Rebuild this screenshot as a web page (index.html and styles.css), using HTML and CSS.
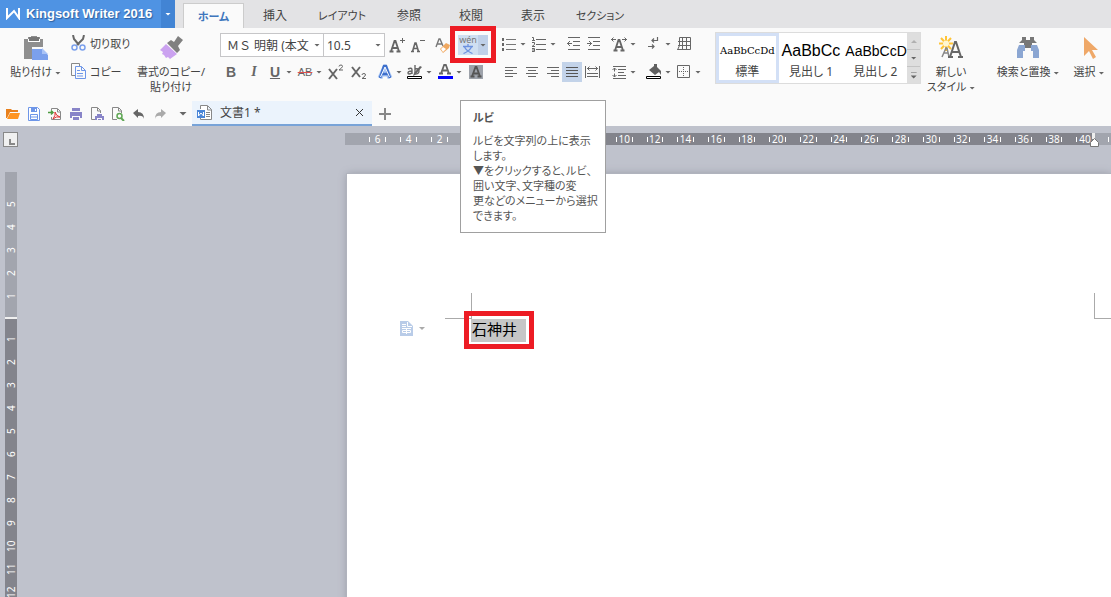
FILE: index.html
```html
<!DOCTYPE html>
<html lang="ja">
<head>
<meta charset="utf-8">
<title>Kingsoft Writer 2016</title>
<link rel="stylesheet" href="styles.css">
</head>
<body>
<header class="titlebar">
  <button class="brand"><svg class="logo" width="15" height="12" viewBox="0 0 15 12"><path d="M1 0v10l7-7 5 7V0" fill="none" stroke="#fff" stroke-width="2"/></svg><span>Kingsoft Writer 2016</span></button>
  <button class="brand-more" aria-label="メニュー"><i class="caret light"></i></button>
  <nav class="tabs">
    <button class="tab active">ホーム</button>
    <button class="tab">挿入</button>
    <button class="tab wide">レイアウト</button>
    <button class="tab">参照</button>
    <button class="tab">校閲</button>
    <button class="tab">表示</button>
    <button class="tab wide">セクション</button>
  </nav>
</header>

<section class="ribbon">
  <button class="big paste">
    <svg width="26" height="26" viewBox="0 0 26 26"><path d="M1 3h4V1h3V0h6v1h3v2h3v8H9v12H1z" fill="#8f8f8f"/><path d="M5 3h12v3H5z" fill="#fff"/><path d="M6 1h10v4H6z" fill="#777"/><path d="M9 13h10l6 6v5H9z" fill="#7ba0ec"/><path d="M19 12v6h6z" fill="#a9c3f6"/></svg>
    <span>貼り付け <i class="caret"></i></span>
  </button>
  <div class="clip">
    <button class="small"><svg width="15" height="16" viewBox="0 0 15 16"><path d="M2 0l1 4 5 6M13 0l-1 4-6 6" fill="none" stroke="#666" stroke-width="2"/><circle cx="3.500" cy="12.500" r="2.500" fill="none" stroke="#7ba0ec" stroke-width="1.500"/><circle cx="11.500" cy="12.500" r="2.500" fill="none" stroke="#7ba0ec" stroke-width="1.500"/></svg>切り取り</button>
    <button class="small"><svg width="15" height="16" viewBox="0 0 15 16"><path d="M4 12.500H.5V.5h8V3" fill="none" stroke="#888"/><path d="M4.500 3.500h6l4 4v8h-10zM10.500 3.500v4h4M6 7.500h3M6 10.500h6M6 13h6" fill="none" stroke="#6e96e8"/></svg>コピー</button>
  </div>
  <button class="big painter">
    <svg width="26" height="26" viewBox="0 0 26 26"><path d="M20 0l5 4-5 6 2 4-3 3L9 7l4-3 3 2z" fill="#808080"/><path d="M8 8l11 10-7 5-2-2-2 1-2-3-2-1 1-2-3-2z" fill="#cba2f0"/></svg>
    <span>書式のコピー/<br>貼り付け</span>
  </button>

  <div class="group font-group">
    <div class="row font-row-1">
      <button class="combo family"><span>ＭＳ 明朝 (本文</span><i class="caret"></i></button>
      <button class="combo size"><span>10.5</span><i class="caret"></i></button>
      <button class="ic" aria-label="フォントの拡大"><svg width="16" height="18" viewBox="0 0 16 18"><path d="M.5 15.500h4M7.500 15.500h4M2 15.500L5.500 5h1L10 15.500M4 12h5" fill="none" stroke="#666" stroke-width="1.800"/><path d="M11 4.500h5M13.500 2v5" stroke="#666"/></svg></button>
      <button class="ic" aria-label="フォントの縮小"><svg width="16" height="18" viewBox="0 0 16 18"><path d="M1 15.500h3M7 15.500h3M2.500 15.500L5 7h1l2.500 8.500M4 12.500h4" fill="none" stroke="#666" stroke-width="1.600"/><path d="M10 4.500h5" stroke="#666"/></svg></button>
      <button class="ic" aria-label="書式のクリア"><svg width="18" height="18" viewBox="0 0 18 18"><path d="M2 11l3-8h1l3 7M3 8h5" fill="none" stroke="#777" stroke-width="1.400"/><path d="M6 13l6-6 4 2-1 3-6 5z" fill="#f0a860"/><path d="M7 13l2-2 3 2-3 3z" fill="#fff"/></svg></button>
      <button class="ruby" aria-label="ルビ"><span class="ruby-icon"><span class="wen">wén</span><svg width="12" height="10" viewBox="0 0 12 10"><path d="M6 0v2M1 2.500h10M2.500 3q2 4 8 6.500M9.500 3q-2 4-8 6.500" fill="none" stroke="#6c92df" stroke-width="1.300"/></svg></span><span class="ruby-more"><i class="caret"></i></span></button>
    </div>
    <div class="row font-row-2">
      <button class="ic letter"><b>B</b></button>
      <button class="ic letter italic"><i>I</i></button>
      <button class="split letter"><u>U</u><i class="caret"></i></button>
      <button class="split strike"><s>AB</s><i class="caret"></i></button>
      <button class="ic"><svg width="16" height="16" viewBox="0 0 16 16"><path d="M1 5l8 10M9 5L1 15" stroke="#666" stroke-width="2"/><path d="M11 2.500q0-1.500 2-1.500 1.500 0 1.500 1.500Q14 4 11 6h4" fill="none" stroke="#666"/></svg></button>
      <button class="ic"><svg width="16" height="16" viewBox="0 0 16 16"><path d="M1 3l8 10M9 3L1 13" stroke="#666" stroke-width="2"/><path d="M11 11q0-1.500 2-1.500 1.500 0 1.500 1.500-1 2-3.500 3.500h4" fill="none" stroke="#666"/></svg></button>
      <button class="split"><svg width="16" height="16" viewBox="0 0 16 16"><path d="M3 14L8 3l5 11M5 10h6" fill="none" stroke="#a9c6f6" stroke-width="5" stroke-linejoin="round"/><path d="M3 14L7 2h2l4 12M4.500 10h7" fill="none" stroke="#3e70cc" stroke-width="2.500"/><path d="M3.500 13L8 3l4.500 10" fill="none" stroke="#fff"/></svg><i class="caret"></i></button>
      <button class="split"><svg width="16" height="16" viewBox="0 0 16 16"><path d="M1 5q4-2 4 1v4M5 7Q1 7 1 9t4 0M8 1v9M8 5q4-1 4 2t-4 3" fill="none" stroke="#666" stroke-width="1.400"/><path d="M15 3L8 11l-2 1 1-3 6-7z" fill="#666"/><path d="M.5 12.500h14v2H.5z" fill="#fff" stroke="#000"/></svg><i class="caret"></i></button>
      <button class="split"><svg width="16" height="16" viewBox="0 0 16 16"><path d="M2 9.500h4M10 9.500h4M4 9.500L7.500 0h1L12 9.500M5 6.500h6" fill="none" stroke="#666" stroke-width="1.800"/><path d="M1 12h15v3H1z" fill="#00f"/></svg><i class="caret"></i></button>
      <button class="ic"><svg width="16" height="16" viewBox="0 0 16 16"><path d="M1 1h14v14H1z" fill="#9da2aa"/><path d="M2.500 12.500h4M9.500 12.500h4M4 12.500L7.500 3h1L12 12.500M5 9.500h6" fill="none" stroke="#555" stroke-width="1.800"/></svg></button>
    </div>
  </div>

  <div class="group para-group">
    <div class="row para-row-1">
      <button class="split"><svg width="16" height="16" viewBox="0 0 16 16"><path d="M5 3.500h10M5 8.500h10M5 13.500h10" stroke="#777"/><path d="M1 2h2v3H1zM1 7h2v3H1zM1 12h2v3H1z" fill="#666"/></svg><i class="caret"></i></button>
      <button class="split"><svg width="16" height="16" viewBox="0 0 16 16"><path d="M5 3.500h10M5 8.500h10M5 13.500h10M1 1.500h1.500v3M1 4.500h3M1 6.500h2.500v2L1 10.500h3M1 12.500h2.500v3H1M1 14h2" fill="none" stroke="#666"/></svg><i class="caret"></i></button>
      <button class="ic"><svg width="16" height="16" viewBox="0 0 16 16"><path d="M2 1.500h12M7 5.500h7M7 9.500h7M2 13.500h12M1 7.500h5M4 5L1.500 7.500 4 10" fill="none" stroke="#666"/></svg></button>
      <button class="ic"><svg width="16" height="16" viewBox="0 0 16 16"><path d="M2 1.500h12M7 5.500h7M7 9.500h7M2 13.500h12M1 7.500h5M3 5l2.500 2.500L3 10" fill="none" stroke="#666"/></svg></button>
      <button class="split"><svg width="16" height="16" viewBox="0 0 16 16"><path d="M2.500 14.500h4M9.500 14.500h4M4 14.500L7.500 4h1L12 14.500M5 11h6" fill="none" stroke="#666" stroke-width="1.800"/><path d="M0 3.500h5M11 3.500h5M2.500 1.500l-2 2 2 2M13.500 1.500l2 2-2 2" fill="none" stroke="#666"/></svg><i class="caret"></i></button>
      <button class="split"><svg width="16" height="16" viewBox="0 0 16 16"><path d="M11.500 1v3.500H6M8 2.500l-2 2 2 2M2 10.500h6M6 8.500l2 2-2 2" fill="none" stroke="#666" stroke-width="1.200"/></svg><i class="caret"></i></button>
      <button class="ic"><svg width="16" height="16" viewBox="0 0 16 16"><path d="M3.500 1.500h11v12H1.500M6.500 1v13M10.500 1v13M2 5.500h13M2 9.500h13M3.500 1.500v8L1.500 14" fill="none" stroke="#666"/></svg></button>
    </div>
    <div class="row para-row-2">
      <button class="ic"><svg width="16" height="16" viewBox="0 0 16 16"><path d="M2 3.500h12M2 6.500h8M2 9.500h12M2 12.500h8" stroke="#666"/></svg></button>
      <button class="ic"><svg width="16" height="16" viewBox="0 0 16 16"><path d="M2 3.500h12M4 6.500h8M2 9.500h12M4 12.500h8" stroke="#666"/></svg></button>
      <button class="ic"><svg width="16" height="16" viewBox="0 0 16 16"><path d="M2 3.500h12M6 6.500h8M2 9.500h12M6 12.500h8" stroke="#666"/></svg></button>
      <button class="ic pressed"><svg width="16" height="16" viewBox="0 0 16 16"><path d="M2 3.500h12M2 6.500h12M2 9.500h12M2 12.500h12" stroke="#555"/></svg></button>
      <button class="ic"><svg width="16" height="16" viewBox="0 0 16 16"><path d="M1.500 2v12M15.500 2v12M3 9.500h11M3 12.500h11M3 4.500h11M5.500 2.500l-2 2 2 2M11.500 2.500l2 2-2 2" fill="none" stroke="#666"/></svg></button>
      <button class="split"><svg width="16" height="16" viewBox="0 0 16 16"><path d="M2 2.500h13M7 5.500h8M7 8.500h6M7 11.500h8M2 14.500h13M3.500 4v3.500M3.500 9.500V13M1.500 6l2-2 2 2M1.500 11l2 2 2-2" fill="none" stroke="#666"/></svg><i class="caret"></i></button>
      <button class="split"><svg width="16" height="16" viewBox="0 0 16 16"><path d="M3 6l5-4V0h3v3l4 4v4l-2-3-4 3z" fill="#606060"/><path d="M.5 12.500h14v2H.5z" fill="#fff" stroke="#000"/></svg><i class="caret"></i></button>
      <button class="split"><svg width="16" height="16" viewBox="0 0 16 16"><path d="M1.500 1.500h12v12h-12z" fill="none" stroke="#666"/><path d="M7.500 3v9M3 7.500h9" stroke="#666" stroke-dasharray="1 1"/></svg><i class="caret"></i></button>
    </div>
  </div>

  <div class="gallery">
    <button class="style selected"><span class="sample serif">AaBbCcDd</span><span>標準</span></button>
    <button class="style"><span class="sample large">AaBbCc</span><span>見出し 1</span></button>
    <button class="style"><span class="sample">AaBbCcD</span><span>見出し 2</span></button>
    <div class="gallery-nav">
      <button aria-label="上へ"><i class="caret up"></i></button>
      <button aria-label="下へ"><i class="caret"></i></button>
      <button aria-label="すべて表示"><i class="caret lined"></i></button>
    </div>
  </div>

  <button class="big new-style">
    <svg width="26" height="26" viewBox="0 0 26 26"><path d="M8 0v15M1 7.500h14M3 2l10 11M13 2L3 13" stroke="#ffc436" stroke-width="2"/><circle cx="8" cy="7.500" r="3" fill="#fff6d0"/><path d="M4 21l4-9h1l2 9M6 17h4" fill="none" stroke="#888" stroke-width="1.500"/><path d="M12 21l5-15h1l5 15M14 16h7M10 21h5M20 21h5" fill="none" stroke="#666" stroke-width="2"/></svg>
    <span>新しい<br>スタイル <i class="caret"></i></span>
  </button>
  <button class="big find">
    <svg width="26" height="26" viewBox="0 0 26 26"><path d="M7 1h4v3h4V1h4v3l3 3H4l3-3zM9 7h8v5H9z" fill="#777"/><path d="M4 9h6v6H8v7H2v-8zM16 9h6l2 5v8h-6v-7h-2z" fill="#8ba6d2"/></svg>
    <span>検索と置換 <i class="caret"></i></span>
  </button>
  <button class="big select">
    <svg width="26" height="26" viewBox="0 0 26 26"><path d="M8 1v19l5-5 4 8 3-2-4-7h6z" fill="#efa868"/></svg>
    <span>選択 <i class="caret"></i></span>
  </button>
</section>

<section class="quickbar">
  <div class="quick">
    <button aria-label="開く"><svg width="14" height="14" viewBox="0 0 14 14"><path d="M0 2h5l1 1h6v2H4l-3 6H0z" fill="#e8801c"/><path d="M4 6h10l-2 6H1z" fill="#ff9420"/></svg></button>
    <button aria-label="保存"><svg width="14" height="14" viewBox="0 0 14 14"><path d="M1.500.5h9l2 2v11h-11z" fill="#fff" stroke="#6e96e8"/><path d="M4 1h6v4H4z" fill="#6e96e8"/><path d="M8 2h1v2H8z" fill="#fff"/><path d="M3.500 7.500h7v5h-7zM4 10h6" fill="none" stroke="#6e96e8"/></svg></button>
    <button aria-label="PDF出力"><svg width="14" height="14" viewBox="0 0 14 14"><path d="M3.500 3V1.500h6l3 3v8h-9V10M9.500 2v3h3" fill="none" stroke="#888"/><path d="M5 12q3-4 2-7 1 4 5 5-4-1-7 2" fill="none" stroke="#e03030"/><path d="M0 5.500h5M3 3.500l2 2-2 2" fill="none" stroke="#4d9a42" stroke-width="1.500"/></svg></button>
    <button aria-label="印刷"><svg width="14" height="14" viewBox="0 0 14 14"><path d="M3 1h8v3H3zM1 5h12v6h-2V9H3v2H1zM4 10h6v3H4z" fill="#8884c8"/></svg></button>
    <button aria-label="印刷設定"><svg width="14" height="14" viewBox="0 0 14 14"><path d="M5 12.500H1.500V.5h6l3 3V6M7.500 1v3h3" fill="none" stroke="#888"/><path d="M7 7h5v2h2v4h-2v-2H7v2H5V9h2zM8 12h3v1H8z" fill="#8884c8"/></svg></button>
    <button aria-label="印刷プレビュー"><svg width="14" height="14" viewBox="0 0 14 14"><path d="M6 12.500H1.500V.5h6l3 3V6M7.500 1v3h3" fill="none" stroke="#888"/><circle cx="8.500" cy="9" r="2.500" fill="none" stroke="#5fa654" stroke-width="1.500"/><path d="M10 11l3 3" stroke="#5fa654" stroke-width="2"/></svg></button>
    <button aria-label="元に戻す"><svg width="14" height="14" viewBox="0 0 14 14"><path d="M1 6l5-4v3q6 0 6 7-1-4-6-3v2z" fill="#666"/></svg></button>
    <button aria-label="やり直し"><svg width="14" height="14" viewBox="0 0 14 14"><path d="M13 6L8 2v3q-6 0-6 7 1-4 6-3v2z" fill="#aaa"/></svg></button>
    <button aria-label="その他"><i class="caret wide"></i></button>
  </div>
  <div class="doctab">
    <svg width="15" height="15" viewBox="0 0 15 15"><path d="M3.500 4V.5h7l4 4v10h-11V13M10.500 1v4h4M9 7.500h4M9 9.500h4M9 11.500h4" fill="#fff" stroke="#888"/><path d="M0 5h8v8H0z" fill="#4a86d8"/><path d="M1.500 7v4l2.500-3 2.500 3V7" fill="none" stroke="#fff"/></svg>
    <span>文書1 *</span>
    <button aria-label="閉じる"><svg width="9" height="9" viewBox="0 0 9 9"><path d="M1 1l7 7M8 1L1 8" stroke="#333"/></svg></button>
  </div>
  <button class="add" aria-label="新規"><svg width="12" height="12" viewBox="0 0 12 12"><path d="M0 6h12M6 0v12" stroke="#888" stroke-width="2"/></svg></button>
</section>

<main class="workspace">
  <aside class="left">
    <button class="tabstop" aria-label="タブ"><svg width="13" height="13" viewBox="0 0 13 13"><path d="M6 6v5h5" fill="none" stroke="#888" stroke-width="2"/></svg></button>
    <div class="vruler">
      <div class="vmargin"><span>5</span><span>4</span><span>3</span><span>2</span><span>1</span></div>
      <div class="vbody"><span>1</span><span>2</span><span>3</span><span>4</span><span>5</span><span>6</span><span>7</span><span>8</span><span>9</span><span>10</span><span>11</span><span>12</span></div>
    </div>
  </aside>
  <div class="canvas">
    <div class="hruler">
      <div class="hmargin"><span>6</span><span>4</span><span>2</span></div>
      <div class="hbody"><div class="marks"><span></span><span></span><span></span><span></span><span>10</span><span>12</span><span>14</span><span>16</span><span>18</span><span>20</span><span>22</span><span>24</span><span>26</span><span>28</span><span>30</span><span>32</span><span>34</span><span>36</span><span>38</span><span class="last">40</span></div></div>
      <div class="hend"><svg class="indent" width="9" height="14" viewBox="0 0 9 14"><path d="M2 0h3v6H2z" fill="#eee"/><path d="M.5 13.500v-4l4-4 4 4v4z" fill="#fff" stroke="#777"/></svg><i class="tick"></i></div>
    </div>
    <article class="page">
      <div class="corners"><i class="corner tl"></i><i class="corner tr"></i></div>
      <div class="line">
        <button class="para-menu" aria-label="段落"><svg width="13" height="15" viewBox="0 0 13 15"><path d="M0 0h8l5 5v10H0z" fill="#b9cce8"/><path d="M2 3.500h4M2 5.500h4M7.500 1v4.500H12M2 7.500h9M2.500 9.500h8v2h-8zM6.500 7v6" fill="none" stroke="#fff"/></svg><i class="caret pale"></i></button>
        <span class="selection">石神井</span>
      </div>
    </article>
  </div>
</main>

<div class="tooltip" role="tooltip">
  <h2>ルビ</h2>
  <p>ルビを文字列の上に表示<br>します。<br>▼をクリックすると、ルビ、<br>囲い文字、文字種の変<br>更などのメニューから選択<br>できます。</p>
</div>
<div class="mark mark-ruby"></div>
<div class="mark mark-text"></div>
</body>
</html>
```

FILE: styles.css
```css
* { box-sizing: border-box; }

body {
  margin: 0;
  min-height: 100vh;
  display: flex;
  flex-direction: column;
  position: relative;
  overflow: hidden;
  font: 12px/15px "Noto Sans", "Noto Sans CJK JP", sans-serif;
  font-feature-settings: "palt";
  color: #444;
  background: #bfc2cc;
}

button {
  margin: 0;
  padding: 0;
  border: 0;
  background: none;
  color: inherit;
  font: inherit;
  font-feature-settings: inherit;
  white-space: nowrap;
}

svg { display: block; flex: none; }

.caret {
  display: inline-block;
  flex: none;
  width: 6px;
  height: 3px;
  background: #666;
  clip-path: polygon(0 0, 100% 0, 50% 100%);
  vertical-align: middle;
}
.caret.light { background: #fff; }
.caret.pale { background: #aaa; }
.caret.wide { width: 8px; height: 4px; }
.caret.up { background: #b0b0b0; transform: rotate(180deg); }
.caret.lined { height: 7px; clip-path: polygon(0 0, 100% 0, 100% 1px, 0 1px, 0 4px, 100% 4px, 50% 100%, 0 4px); }

/* Title bar */
.titlebar { display: flex; height: 28px; background: #e3e3e5; }
.brand {
  display: flex;
  align-items: center;
  gap: 5px;
  width: 161px;
  padding-left: 6px;
  background: #4f93e3;
  color: #fff;
  font: bold 13px/28px "Liberation Sans", sans-serif;
  text-shadow: 1px 1px 1px #2c5f9f;
}
.brand-more { display: flex; align-items: center; justify-content: center; width: 14px; background: #4284d4; }
.tabs { display: flex; align-items: flex-end; padding-left: 8px; }
.tab { width: 62px; height: 25px; }
.tab.wide { width: 72px; font-size: 11px; }
.tab.active {
  width: 61px;
  background: #fafafa;
  border: 1px solid #ccc;
  border-bottom: 0;
  color: #3f76bd;
  font-size: 11px;
  font-weight: bold;
}

/* Ribbon */
.ribbon { display: flex; align-items: flex-start; height: 73px; padding-top: 4px; background: #fafafa; }
.big { display: flex; flex-direction: column; align-items: center; gap: 1px; padding-top: 4px; flex: none; font-size: 11px; }
.big > svg { margin-bottom: 1px; }
.paste { width: 71px; }
.clip { display: flex; flex-direction: column; gap: 12px; width: 66px; padding-top: 3px; flex: none; }
.small { display: flex; align-items: center; gap: 4px; font-size: 11px; }
.painter { width: 68px; }
.group { display: flex; flex-direction: column; gap: 7px; padding-top: 1px; flex: none; }
.font-group { width: 268px; margin-left: 15px; }
.para-group { width: 202px; margin-left: 13px; }
.row { display: grid; align-items: center; justify-items: start; height: 22px; }
.row + .row { height: 20px; }
.font-row-1 { grid-template-columns: 104px 65px 21px 24px 23px 31px; }
.font-row-2 { grid-template-columns: 23px 21px 30px 31px 23px 26px 30px 30px 31px 16px; padding-left: 3px; }
.para-row-1 { grid-template-columns: 30px 35px 20px 25px 35px 30px 16px; }
.para-row-2 { grid-template-columns: 21px 21px 17px 22px 27px 35px 30px 25px; padding-left: 2px; }
.combo {
  display: flex;
  align-items: center;
  justify-content: space-between;
  width: 104px;
  height: 24px;
  padding: 0 3px 0 6px;
  background: #fff;
  border: 1px solid #c6c6c8;
}
.combo.family { font-feature-settings: normal; }
.combo.size { width: 61px; padding-left: 3px; border-left: 0; }
.ic { display: flex; align-items: center; justify-content: center; min-width: 16px; height: 20px; }
.split { display: flex; align-items: center; gap: 3px; width: 25px; height: 20px; }
.letter { color: #666; font: bold 14px/16px "Liberation Sans", sans-serif; }
.letter.italic { font-family: "Liberation Serif", serif; }
.letter u { width: 16px; text-align: center; }
.strike { color: #666; font: 11px/16px "Liberation Sans", sans-serif; }
.strike s { width: 16px; text-decoration-color: #e05050; }
.pressed { width: 20px; background: #c3d3e9; }
.ruby { display: flex; width: 30px; height: 20px; margin-left: 1px; }
.ruby-icon { display: flex; flex-direction: column; align-items: center; width: 20px; background: #cfdff2; }
.wen { color: #777; font: 9px/9px "Noto Sans", sans-serif; }
.ruby-more { display: flex; align-items: center; justify-content: center; width: 10px; background: #bfd0e8; }

.gallery { display: flex; width: 206px; height: 52px; margin-left: 12px; flex: none; background: #fff; border: 1px solid #dcdcdc; }
.style { display: flex; flex-direction: column; align-items: center; justify-content: space-between; width: 65px; padding: 8px 2px 4px 3px; }
.style.selected { padding: 5px 0 1px; width: 64px; border: 3px solid #d3e0f6; }
.style > .sample { align-self: flex-start; width: 100%; text-align: left; color: #000; font: 14px/20px "Liberation Sans", sans-serif; }
.style > .sample.large { font-size: 16px; }
.style > .sample.serif { font: 10px/20px "DejaVu Serif", serif; text-align: center; }
.gallery-nav { display: grid; grid-template-rows: 1fr 1fr 1fr; gap: 1px; width: 13px; margin-left: auto; background: #c4c4c4; }
.gallery-nav button { display: flex; align-items: center; justify-content: center; background: #dedede; }

.new-style { width: 60px; }
.find { width: 94px; }
.select { width: 28px; }

/* Quick access bar and document tab */
.quickbar { display: flex; align-items: stretch; height: 25px; background: #fafafa; }
.quick { display: flex; align-items: center; gap: 7px; width: 192px; padding-left: 6px; }
.quick button:last-child { margin-left: 5px; display: flex; }
.doctab { display: flex; align-items: center; gap: 8px; width: 180px; padding: 0 8px 0 5px; background: #ebf3fc; border-bottom: 2px solid #78a3d8; }
.doctab button { margin-left: auto; }
.add { padding: 0 7px; }

/* Rulers */
.workspace { display: flex; flex: 1; height: 471px; min-height: 0; }
.left { width: 345px; padding: 6px 0 0 3px; display: flex; flex-direction: column; gap: 25px; flex: none; overflow: hidden; }
.tabstop { width: 15px; height: 15px; background: #f0f0f0; border: 1px solid #888; flex: none; }
.vruler { display: flex; flex-direction: column; flex: 1; width: 12px; margin-left: 2px; min-height: 0; color: #fff; font: 10px/12px "Noto Sans", sans-serif; }
.vruler span { display: flex; align-items: center; justify-content: center; height: 23px; width: 12px; writing-mode: vertical-rl; transform: rotate(180deg); }
.vmargin { padding: 21px 0 9px; background: #a2a5ae; border-bottom: 2px solid #f0f0f0; }
.vbody { flex: 1; padding-top: 9px; background: #83848c; }
.canvas { display: flex; flex-direction: column; flex: 1; min-width: 0; padding-top: 7px; }
.hruler { display: flex; height: 12px; flex: none; color: #fff; font: 10px/12px "Noto Sans", sans-serif; }
.hruler span { display: flex; align-items: center; justify-content: space-between; height: 12px; padding: 0 7px; }
.hruler span::before, .hruler span::after, .tick { content: ""; width: 1px; height: 5px; background: #fff; }
.hruler .last::after { display: none; }
.hruler .last { justify-content: flex-start; gap: 2px; }
.hmargin { display: grid; grid-template-columns: repeat(3, 31px); width: 126px; padding-left: 17px; background: #a2a5ae; }
.hbody { flex: 1; background: #83848c; }
.marks { display: grid; grid-template-columns: repeat(20, 1fr); margin: 0 -6px 0 15px; }
.hend { display: flex; align-items: center; justify-content: space-between; width: 17px; padding-right: 2px; background: #a2a5ae; }
.indent { position: relative; left: -4px; top: 1px; }

/* Page */
.page { flex: 1; margin: 29px 0 0 2px; padding-top: 119px; background: #fff; box-shadow: 0 0 0 1px #b0b3bd, 0 0 8px #9598a3; }
.corners { display: flex; justify-content: space-between; height: 26px; padding-left: 98px; }
.corner { border: 0 solid #aaa; border-bottom-width: 1px; }
.tl { width: 27px; border-right-width: 1px; }
.tr { width: 17px; border-left-width: 1px; }
.line { display: flex; align-items: flex-start; padding-left: 53px; }
.para-menu { display: flex; align-items: center; gap: 6px; width: 71px; padding-top: 2px; }
.selection { width: 55px; height: 23px; padding-left: 1px; background: #c6c6c6; color: #000; font: 15px/20px "Noto Sans CJK JP", sans-serif; }

/* Overlays */
.tooltip {
  position: absolute;
  left: 460px;
  top: 100px;
  width: 146px;
  height: 133px;
  padding: 9px 12px;
  background: #fff;
  border: 1px solid #a0a0a0;
  color: #555;
  font-size: 11px;
  white-space: nowrap;
}
.tooltip h2 { margin: 0 0 8px; font-size: 11px; line-height: 15px; }
.tooltip p { margin: 0; }
.mark { position: absolute; border: 5px solid #ed1c24; pointer-events: none; }
.mark-ruby { left: 450px; top: 26px; width: 46px; height: 37px; }
.mark-text { left: 464px; top: 311px; width: 70px; height: 38px; }
```
